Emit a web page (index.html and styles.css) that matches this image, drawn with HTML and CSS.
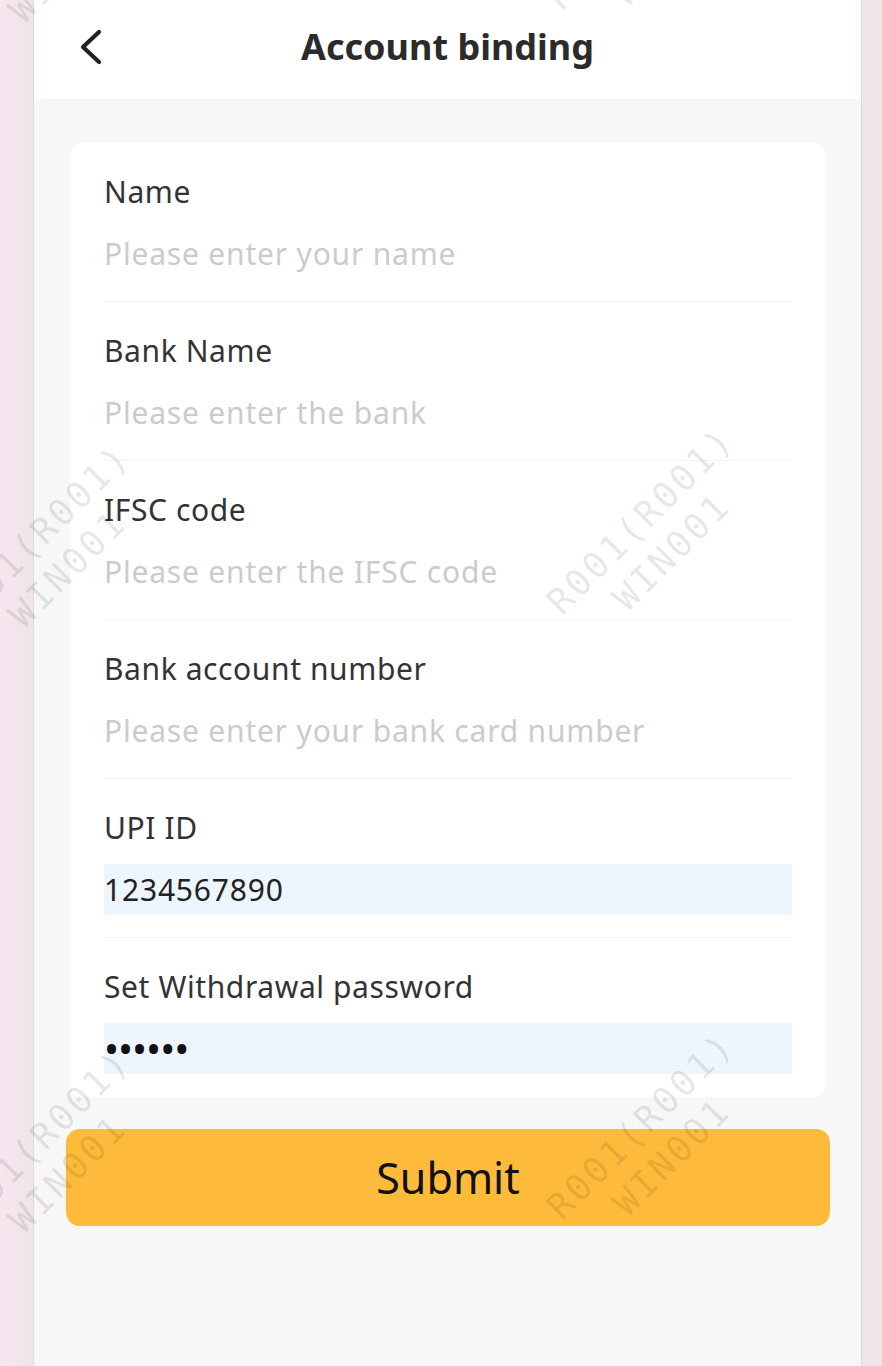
FILE: index.html
```html
<!DOCTYPE html>
<html lang="en">
<head>
<meta charset="utf-8">
<title>Account binding</title>
<link rel="stylesheet" href="styles.css">
</head>
<body>
<div class="app">
  <header class="topbar">
    <button class="back" aria-label="Back">
      <svg width="28" height="40" viewBox="0 0 28 40"><polyline points="21,5 5,20 21,35" fill="none" stroke="#222" stroke-width="4.2" stroke-linecap="round" stroke-linejoin="round"/></svg>
    </button>
    <h1 class="title">Account binding</h1>
    <span></span>
  </header>
  <main class="content">
    <form class="card">
      <div class="field">
        <label class="label">Name</label>
        <input class="input" type="text" placeholder="Please enter your name">
      </div>
      <div class="field">
        <label class="label">Bank Name</label>
        <input class="input" type="text" placeholder="Please enter the bank">
      </div>
      <div class="field">
        <label class="label">IFSC code</label>
        <input class="input" type="text" placeholder="Please enter the IFSC code">
      </div>
      <div class="field">
        <label class="label">Bank account number</label>
        <input class="input" type="text" placeholder="Please enter your bank card number">
      </div>
      <div class="field">
        <label class="label">UPI ID</label>
        <input class="input filled" type="text" value="1234567890">
      </div>
      <div class="field last">
        <label class="label">Set Withdrawal password</label>
        <div class="input filled dots">••••••</div>
      </div>
    </form>
    <button class="submit" type="button">Submit</button>
  </main>
</div>
<div class="watermarks" aria-hidden="true">
  <div class="wm" style="left:656px;top:-69px"><span>R001(R001)</span><span>WIN001</span></div>
  <div class="wm" style="left:52px;top:-52px"><span>R001(R001)</span><span>WIN001</span></div>
  <div class="wm" style="left:656px;top:536px"><span>R001(R001)</span><span>WIN001</span></div>
  <div class="wm" style="left:52px;top:553px"><span>R001(R001)</span><span>WIN001</span></div>
  <div class="wm" style="left:656px;top:1141px"><span>R001(R001)</span><span>WIN001</span></div>
  <div class="wm" style="left:52px;top:1158px"><span>R001(R001)</span><span>WIN001</span></div>
</div>
</body>
</html>
```
FILE: styles.css
```css
html, body {
  margin: 0;
  padding: 0;
}
body {
  min-height: 1366px;
  background: linear-gradient(to right, #f9e5ef 0, #f6e5ed 10px, #efe6e8 22px, #efe6e8 100%);
  font-family: "Noto Sans", "Open Sans", sans-serif;
  position: relative;
  overflow: hidden;
}
.app {
  margin-left: 34px;
  width: 827px;
  min-height: 1366px;
  background: #f7f7f7;
  box-shadow: -1px 0 0 #e2d8db, 1px 0 0 #e2d8db;
}
.topbar {
  height: 99px;
  background: #fff;
  display: grid;
  grid-template-columns: 1fr auto 1fr;
  align-items: center;
  padding: 0 0 0 44px;
}
.back {
  justify-self: start;
  background: none;
  border: 0;
  padding: 0;
  margin-top: -6px;
  display: flex;
}
.title {
  margin: 0;
  margin-top: -6px;
  font-size: 36px;
  font-weight: 700;
  color: #2b2b2b;
  margin-left: -44px;
}
.content {
  padding-top: 44px;
}
.card {
  margin: 0 35px 0 36px;
  background: #fff;
  border-radius: 12px;
  padding: 0 34px;
}
.field {
  display: flex;
  flex-direction: column;
  padding: 29px 0 22px;
  border-bottom: 1px solid #f2f4f8;
}
.field.last {
  border-bottom: 0;
  padding-bottom: 23px;
}
.label {
  height: 40px;
  line-height: 40px;
  font-size: 30px;
  letter-spacing: 0.6px;
  color: #333;
  margin-bottom: 16px;
}
.input {
  height: 51px;
  border: 0;
  outline: 0;
  padding: 0;
  margin: 0;
  background: transparent;
  font-family: inherit;
  font-size: 30px;
  letter-spacing: 0.8px;
  color: #222;
  width: 100%;
  box-sizing: border-box;
}
.input::placeholder {
  color: #cbcbcb;
}
.input.filled {
  background: #edf5fe;
}
.dots {
  line-height: 51px;
  font-size: 40px;
  letter-spacing: -1px;
  color: #111;
}
.submit {
  display: block;
  margin: 32px 31px 0 32px;
  width: calc(100% - 63px);
  height: 97px;
  border: 0;
  border-radius: 14px;
  background: #febb3b;
  color: #111;
  font-family: inherit;
  font-size: 43px;
  padding: 0;
}
.watermarks {
  position: absolute;
  inset: 0;
  pointer-events: none;
}
.wm {
  position: absolute;
  width: 0;
  height: 0;
}
.wm span:first-child,
.wm span:last-child {
  position: absolute;
  left: 0;
  white-space: nowrap;
  font-family: "DejaVu Sans Mono", "Liberation Mono", monospace;
  font-size: 36px;
  letter-spacing: 3px;
  color: rgba(0, 0, 0, 0.1);
  line-height: 45px;
}
.wm span:first-child {
  transform: translate(-50%, -50%) rotate(-45deg) translateY(-22px);
  transform-origin: 50% 50%;
}
.wm span:last-child {
  transform: translate(-50%, -50%) rotate(-45deg) translateY(22px);
  transform-origin: 50% 50%;
}
```
